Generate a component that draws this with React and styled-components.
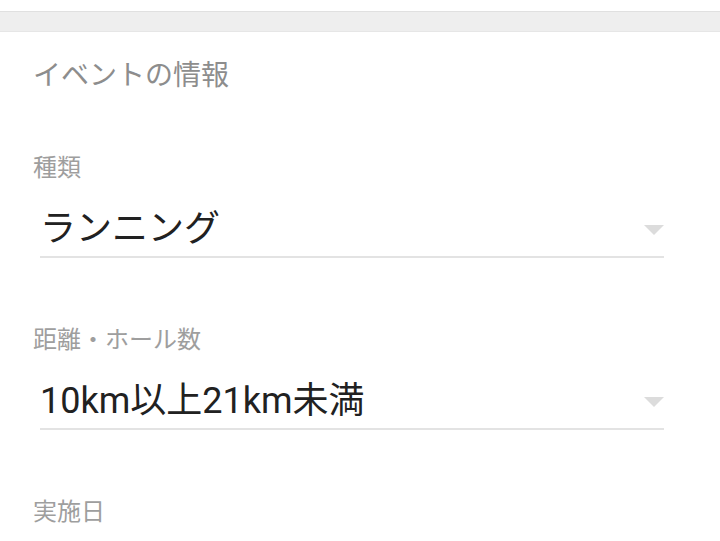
import React from "react";
import styled, { createGlobalStyle } from "styled-components";

const Global = createGlobalStyle`
  html, body { margin: 0; padding: 0; background: #fff; }
  body { font-family: Roboto, "Noto Sans CJK JP", sans-serif; }
`;

const Page = styled.div`
  width: 720px;
  height: 541px;
  overflow: hidden;
  background: #fff;
  display: flex;
  flex-direction: column;
`;

const TopSpace = styled.div`
  height: 11px;
  background: #fff;
`;

const Band = styled.div`
  height: 19px;
  background: #eeeeee;
  border-top: 1px solid #e0e0e0;
  border-bottom: 1px solid #e6e6e6;
`;

const Content = styled.div`
  padding: 0 33px;
  display: flex;
  flex-direction: column;
`;

const Title = styled.h2`
  margin: 26px 0 0;
  font-size: 28px;
  font-weight: 400;
  color: #8d8d8d;
  line-height: 36px;
`;

const Field = styled.div`
  display: flex;
  flex-direction: column;
  margin-top: ${(p) => p.$top}px;
`;

const Label = styled.div`
  font-size: 24px;
  color: #9e9e9e;
  line-height: 30px;
`;

const SelectRow = styled.div`
  margin: 0 23px 0 7px;
  display: flex;
  align-items: center;
  justify-content: space-between;
  height: 75px;
  border-bottom: 2px solid #e3e3e3;
  padding: 18px 0 0 0;
  box-sizing: border-box;
`;

const Value = styled.span`
  font-size: 36px;
  line-height: 44px;
  color: #212121;
`;

const Arrow = styled.span`
  width: 0;
  height: 0;
  border-left: 10px solid transparent;
  border-right: 10px solid transparent;
  border-top: 10px solid #dcdcdc;
  margin-top: 2px;
`;

function SelectField({ label, value, top }) {
  return (
    <Field $top={top}>
      <Label>{label}</Label>
      <SelectRow>
        <Value>{value}</Value>
        <Arrow />
      </SelectRow>
    </Field>
  );
}

export default function App() {
  return (
    <Page>
      <Global />
      <TopSpace />
      <Band />
      <Content>
        <Title>イベントの情報</Title>
        <SelectField top={59} label="種類" value="ランニング" />
        <SelectField top={67} label="距離・ホール数" value="10km以上21km未満" />
        <Field $top={67}>
          <Label>実施日</Label>
        </Field>
      </Content>
    </Page>
  );
}
